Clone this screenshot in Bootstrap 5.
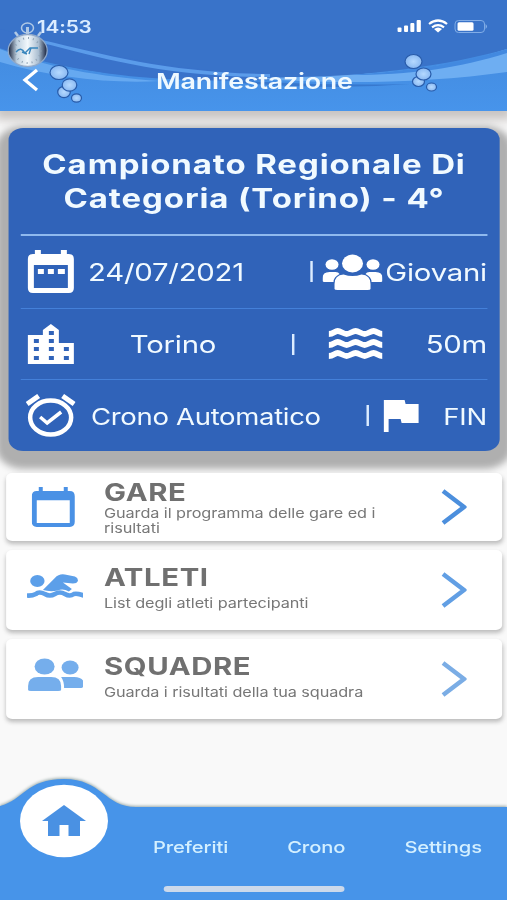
<!DOCTYPE html>
<html lang="it">
<head>
<meta charset="utf-8">
<meta name="viewport" content="width=device-width, initial-scale=1">
<title>Manifestazione</title>
<link href="https://cdn.jsdelivr.net/npm/bootstrap@5.3.0/dist/css/bootstrap.min.css" rel="stylesheet">
<style>
/* The screen is laid out 415px wide and stretched to 507px; --u is one stretched pixel. */
:root{--u:calc(415px / 507)}
html,body{width:507px;height:900px;overflow:hidden}
body{background:#fafafa;font-family:Inter,"Liberation Sans",sans-serif}
.screen{width:415px;height:900px;transform:scaleX(1.221687);transform-origin:0 0;background:#f9f9f9}
svg{display:block;flex:none;width:calc(var(--w) * var(--u))}
.t{white-space:nowrap;display:block}
.top-area{height:111px;background:#3973c9;box-shadow:0 5px 9px 4px #c8c4c2;color:#eff9ff}
.decor{left:0;top:0;width:100%}
.status{height:52px;padding:0 calc(20*var(--u)) 0 calc(37*var(--u))}
.clock{font-size:17px;font-weight:600;letter-spacing:-.15px;color:#dcedff;padding-top:3px}
.title-bar{height:59px;padding-left:calc(22*var(--u))}
.title-bar h1{font-size:22px;font-weight:600;letter-spacing:-.2px;line-height:30px;margin-left:calc(117*var(--u));margin-top:-2px}
.event{margin:17px calc(7*var(--u)) 0 calc(8*var(--u));height:323px;border-radius:12px;background:#3063b9;color:#f1faff;box-shadow:0 8px 7px 10px #afafaf;padding:0 calc(13*var(--u))}
.event h2{height:108px;font-size:27px;font-weight:700;line-height:33.5px;padding-top:20px;border-bottom:2px solid #8fb9ee;letter-spacing:.73px}
.line{display:grid;align-items:center;height:71.7px;font-size:24px;letter-spacing:-.18px}
.line .t{padding-top:2px}
.line + .line{border-top:1.5px solid #4480d9}
.bar{width:2px;height:21px;background:#dcecff;justify-self:center}
.entry{margin:0 calc(5*var(--u)) 9px calc(6*var(--u));background:#fff;border-radius:5px;height:80px;box-shadow:0 3px 4px #bcbcbc;color:#707070;padding-right:calc(35*var(--u))}
.entry.short{height:68px}
.entry .pic{width:calc(98*var(--u));display:flex;justify-content:center}
.entry h3{font-size:24px;line-height:24px;font-weight:700;letter-spacing:.5px;margin:0}
.entry p{font-size:13.3px;line-height:15px;letter-spacing:-.06px;margin:0;color:#777}
.foot{top:775px;left:0;width:100%;height:125px}
.foot nav{padding:61px calc(25*var(--u)) 0 calc(153*var(--u));font-size:16.5px;font-weight:500;letter-spacing:-.1px;line-height:22px;color:#d4f0ff}
.home-line{left:calc(164*var(--u));bottom:8px;width:calc(180*var(--u));height:6px;border-radius:3px;background:#ccd9eb}
</style>
</head>
<body>
<div class="screen position-relative overflow-hidden">
<header class="top-area position-relative">
  <svg class="decor position-absolute" style="--w:507" height="111" viewBox="0 0 507 111" preserveAspectRatio="none">
    <defs>
      <linearGradient id="low" x2="0" y2="1"><stop stop-color="#438bdf"/><stop offset="1" stop-color="#4794eb"/></linearGradient>
      <radialGradient id="bub"><stop stop-color="#b5d9ff"/><stop offset="1" stop-color="#8ab9f2"/></radialGradient>
      <linearGradient id="dial"><stop stop-color="#121c35"/><stop offset=".22" stop-color="#bed0df"/><stop offset=".5" stop-color="#f2f8fc"/><stop offset=".78" stop-color="#a9bdd0"/><stop offset="1" stop-color="#101b38"/></linearGradient>
    </defs>
    <path d="M0 48C60 72 160 82 260 80C370 77 450 65 507 49V111H0Z" fill="url(#low)"/>
    <path d="M0 29C90 50 165 72 270 73V80C160 83 90 74 45 60L0 48Z" fill="#3972ca"/>
    <path d="M42 40C110 56 170 73 270 74V77C160 77 100 57 42 43Z" fill="#5b9cea"/>
    <path d="M0 49C45 67 100 77 160 81C110 84 50 77 0 62Z" fill="#72b1f4" opacity=".75"/>
    <path d="M250 78C350 77 440 72 507 49V72C430 83 330 85 250 78Z" fill="#75b4f4" opacity=".85"/>
    <path d="M350 75C420 70 460 63 507 49V53C460 68 410 75 350 75Z" fill="#4289e0"/>
    <path d="M230 82Q320 91 410 84Q320 86 230 80Z" fill="#3778ce"/>
    <g fill="url(#bub)" stroke="#285ba9" stroke-width="1.2">
      <ellipse cx="64" cy="92" rx="6.3" ry="5.7"/><ellipse cx="59" cy="72.500" rx="9" ry="7"/><ellipse cx="69.500" cy="85" rx="7.300" ry="6.200"/><ellipse cx="76.500" cy="98" rx="5" ry="4.200"/>
      <ellipse cx="418.500" cy="81.500" rx="6" ry="5"/><ellipse cx="413.500" cy="61.500" rx="8.500" ry="7"/><ellipse cx="423.500" cy="74" rx="7.500" ry="6"/><ellipse cx="431.500" cy="87" rx="5" ry="4"/>
    </g>
    <g fill="none" stroke="#b1cae6"><ellipse cx="27.500" cy="28" rx="6" ry="5" stroke-width="1.500"/><path d="M27.500 27v8" stroke-width="3"/><path d="M15 32l3 4M41 32l-3 4" stroke-width="2.500"/></g>
    <ellipse cx="27.700" cy="50.500" rx="19.500" ry="16" fill="url(#dial)" stroke="#91a9c9" stroke-width="1.300"/>
    <ellipse cx="27.700" cy="50.500" rx="13" ry="12.500" fill="none" stroke="#8fa2b4" stroke-width="2" stroke-dasharray="1 4"/>
    <path d="M16 52q5-6 9 1l5-5h8M31 48l-2 6M22 52l5 2" fill="none" stroke="#3986bd" stroke-width="1.400"/>
  </svg>
  <div class="status d-flex align-items-center justify-content-between position-relative">
    <span class="t clock">14:53</span>
    <svg style="--w:90" height="14" viewBox="397 19 90 14" preserveAspectRatio="none">
      <g fill="#fff"><rect x="397.500" y="27.500" width="4" height="4.500" rx="1"/><rect x="404" y="25.500" width="4" height="6.500" rx="1"/><rect x="410.300" y="23" width="4" height="9" rx="1"/><rect x="416.600" y="20" width="4.200" height="12" rx="1"/><path d="M434 29q4-3 8 0l-4 3.500z"/></g>
      <path d="M429 24q9-7 18 0M432 27.300q6-4.500 12 0" fill="none" stroke="#fff" stroke-width="2.200"/>
      <rect x="455" y="20.500" width="29.500" height="12" rx="3.500" fill="none" stroke="#83aee7"/><rect x="457.500" y="22.300" width="16" height="8.400" rx="1.500" fill="#fff"/><path d="M485.500 24v5q3-2.500 0-5" fill="#83aee7"/>
    </svg>
  </div>
  <div class="title-bar d-flex align-items-center position-relative">
    <svg style="--w:17;margin-top:-3px" height="24" viewBox="0 0 17 24" preserveAspectRatio="none"><path d="M15 2L3 12l12 10" fill="none" stroke="#fff" stroke-width="3.300"/></svg>
    <h1 class="t mb-0">Manifestazione</h1>
  </div>
</header>

<section class="event position-relative">
  <h2 class="text-center mb-0"><span class="t">Campionato Regionale Di</span><span class="t">Categoria (Torino) - 4°</span></h2>
  <div class="line" style="grid-template-columns:calc(60*var(--u)) calc(170*var(--u)) calc(131*var(--u)) 1fr">
    <svg class="mx-auto" style="--w:48" height="43" viewBox="0 0 48 43" preserveAspectRatio="none"><path fill="#fff" fill-rule="evenodd" d="M8 0h6v4h20V0h6v4h2q5 0 5 5v29q0 5-5 5H6q-5 0-5-5V9q0-5 5-5h2zM7 15v23h34V15zM11 19h6v5h-6zm10 0h6v5h-6zm10 0h7v5h-7z"/></svg>
    <span class="t text-center">24/07/2021</span>
    <div class="d-flex align-items-center justify-content-end"><span class="bar"></span><svg style="--w:60;margin-left:calc(9*var(--u))" height="36" viewBox="0 0 60 36" preserveAspectRatio="none"><g fill="#fff"><ellipse cx="30" cy="9.500" rx="10.500" ry="9"/><ellipse cx="9.500" cy="10.500" rx="6.500" ry="5.300"/><ellipse cx="50.500" cy="10.500" rx="6.500" ry="5.300"/><path d="M12 35V30q0-9 9-9.500q9 3 18 0q9 .5 9 9.500v5q0 1-3 1H15q-3 0-3-1M0 28v-4q0-6 7-6h6q3 0 4 2q-6 3-6 8H2q-2 0-2-1M60 27v-3q0-6-7-6h-6q-3 0-4 2q6 3 6 8h9q2 0 2-1"/></g></svg></div>
    <span class="t text-end">Giovani</span>
  </div>
  <div class="line" style="grid-template-columns:calc(60*var(--u)) calc(184*var(--u)) calc(56*var(--u)) calc(70*var(--u)) 1fr">
    <svg class="mx-auto" style="--w:48" height="40" viewBox="0 0 48 40" preserveAspectRatio="none"><path fill="#fff" fill-rule="evenodd" d="M1 11h15V6l8-6 8 6v13h15v21H1zM7 15v4h5v-4zm0 8v4h5v-4zm0 9v4h5v-4zM22 7v4h5V7zm0 8v4h5v-4zm0 8v4h5v-4zm0 9v4h5v-4zm15-9v4h5v-4zm0 9v4h5v-4z"/></svg>
    <span class="t text-center">Torino</span>
    <span class="bar"></span>
    <svg class="mx-auto" style="--w:54" height="32" viewBox="0 0 54 32" preserveAspectRatio="none"><path d="M0 6C5 6 6 3 9 3S15 6 18 6S24 3 27 3S33 6 36 6S42 3 45 3S50 6 54 6M0 17C5 17 6 14 9 14S15 17 18 17S24 14 27 14S33 17 36 17S42 14 45 14S50 17 54 17M0 28C5 28 6 25 9 25S15 28 18 28S24 25 27 25S33 28 36 28S42 25 45 25S50 28 54 28" fill="none" stroke="#fff" stroke-width="5.800"/></svg>
    <span class="t text-end">50m</span>
  </div>
  <div class="line" style="grid-template-columns:calc(60*var(--u)) calc(249*var(--u)) calc(89*var(--u)) 1fr">
    <svg class="mx-auto" style="--w:50" height="43" viewBox="0 0 50 43" preserveAspectRatio="none"><g fill="none" stroke="#fff"><ellipse cx="25" cy="23.500" rx="20.500" ry="17" stroke-width="4.500"/><path d="M1.500 10L13 2M37 2l11.500 8" stroke-width="5"/><path d="M14.500 23l7 6L35.500 18" stroke-width="3.500"/></g></svg>
    <span class="t" style="padding-left:calc(10*var(--u));font-size:22.5px;letter-spacing:-.25px">Crono Automatico</span>
    <div class="d-flex align-items-center justify-content-end"><span class="bar"></span><svg style="--w:35;margin-left:calc(15*var(--u))" height="32" viewBox="0 0 35 32" preserveAspectRatio="none"><path d="M0 0h21l1 4h13v19H18l-1-4H5v13H0z" fill="#fff"/></svg></div>
    <span class="t text-end" style="font-size:22.500px">FIN</span>
  </div>
</section>

<main class="position-relative" style="margin-top:22px">
  <article class="entry short d-flex align-items-center">
    <div class="pic"><svg style="--w:43;margin-left:-2px" height="40" viewBox="0 0 43 39" preserveAspectRatio="none"><path fill="#4a91e5" fill-rule="evenodd" d="M7 0h4v4h21V0h4v4h2q5 0 5 5v25q0 5-5 5H5q-5 0-5-5V9q0-5 5-5h2zM5 13v22h33V13z"/></svg></div>
    <div class="flex-grow-1" style="padding-top:5px"><h3 style="line-height:20px" class="t">GARE</h3><p class="t" style="padding-top:3px">Guarda il programma delle gare ed i<br>risultati</p></div>
    <svg style="--w:26" height="36" viewBox="0 0 26 36" preserveAspectRatio="none"><path d="M2 2l21 16L2 34" fill="none" stroke="#4c8fdd" stroke-width="4.500"/></svg>
  </article>
  <article class="entry d-flex align-items-center">
    <div class="pic"><svg style="--w:57;margin-top:-8px" height="25" viewBox="0 0 57 25" preserveAspectRatio="none"><g fill="#5c9fe9"><ellipse cx="10.500" cy="7" rx="7.200" ry="6"/><path d="M16 16L28 4Q32 -.5 38 .5L48 2.500Q51.500 4 51 7Q50 9.500 46 9.500L36 8.500L45 15L42 17.500Q36 14 31 16.500Q23 18 16 16"/></g><path d="M0 21.500Q5 22 9 20Q12 17 18 20Q23 23 28 20Q33 17 38 20Q43 23 47 20Q50 19 57 21.500" fill="none" stroke="#5c9fe9" stroke-width="4.600"/></svg></div>
    <div class="flex-grow-1" style="margin-top:-3px"><h3 class="t">ATLETI</h3><p class="t" style="padding-top:6px">List degli atleti partecipanti</p></div>
    <svg style="--w:26" height="36" viewBox="0 0 26 36" preserveAspectRatio="none"><path d="M2 2l21 16L2 34" fill="none" stroke="#629fe4" stroke-width="4.500"/></svg>
  </article>
  <article class="entry d-flex align-items-center">
    <div class="pic"><svg style="--w:56;margin-top:-9px;margin-left:1px" height="33" viewBox="0 0 56 33" preserveAspectRatio="none"><g fill="#75aeec"><ellipse cx="16.500" cy="8.500" rx="10" ry="8"/><ellipse cx="42" cy="9.500" rx="8.500" ry="7"/><path d="M0 32V28q0-9 10-9h13q10 0 10 9v4q0 1-3 1H3q-3 0-3-1M33 19h13q10 0 10 8q0 3-5 3H36q0-7-3-11"/></g></svg></div>
    <div class="flex-grow-1" style="margin-top:-4px"><h3 class="t">SQUADRE</h3><p class="t" style="padding-top:6px">Guarda i risultati della tua squadra</p></div>
    <svg style="--w:26" height="36" viewBox="0 0 26 36" preserveAspectRatio="none"><path d="M2 2l21 16L2 34" fill="none" stroke="#7bade5" stroke-width="4.500"/></svg>
  </article>
</main>

<footer class="foot position-absolute">
  <svg class="decor position-absolute" style="--w:507;filter:drop-shadow(0 -1px 1.500px #9aa)" height="125" viewBox="0 775 507 125" preserveAspectRatio="none">
    <path d="M0 806C24 800 26 779 64 779S105 807 136 807H507V900H0Z" fill="#4794e9"/>
    <ellipse cx="64" cy="821" rx="44" ry="36.300" fill="#fff"/>
    <path d="M64 805l22 16h-6v15H68.500V825h-9v11H48V821h-6z" fill="#4a91e3"/>
  </svg>
  <nav class="d-flex justify-content-between position-relative"><span class="t">Preferiti</span><span class="t">Crono</span><span class="t">Settings</span></nav>
  <div class="home-line position-absolute"></div>
</footer>
</div>
<script src="https://cdn.jsdelivr.net/npm/bootstrap@5.3.0/dist/js/bootstrap.bundle.min.js"></script>
</body>
</html>
